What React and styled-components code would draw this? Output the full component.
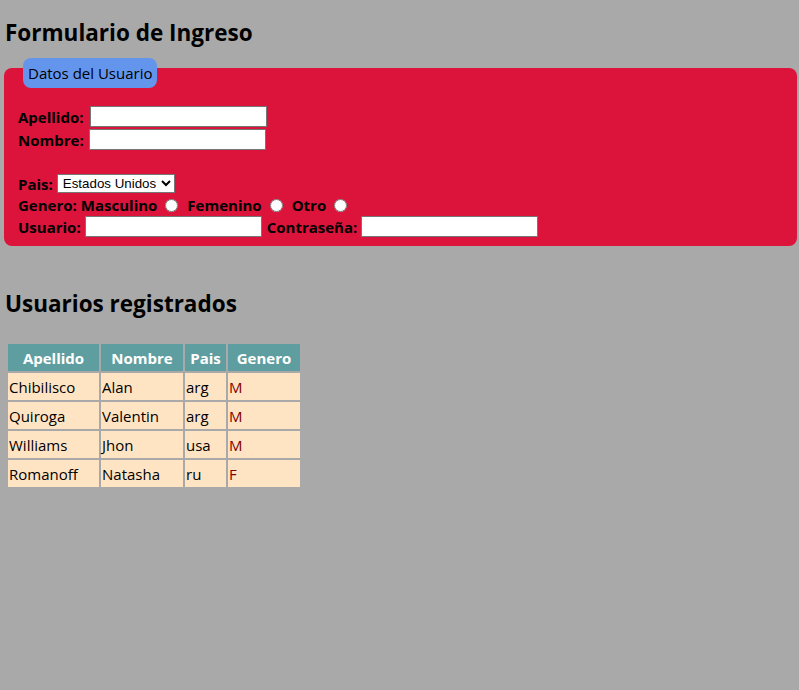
import React from "react";
import styled, { createGlobalStyle } from "styled-components";

const GlobalStyle = createGlobalStyle`
  html, body {
    margin: 0;
    padding: 0;
    background: #a9a9a9;
  }

  body {
    font-family: "Open Sans", "Noto Sans", sans-serif;
    font-size: 16px;
    color: #000;
  }
`;

const Page = styled.div`
  padding: 0 2px 0 4px;
  min-height: 690px;
`;

const Title = styled.h2`
  margin: 0;
  padding: ${(p) => p.$top}px 0 0 1px;
  font-size: 22.5px;
  font-weight: 700;
  line-height: 32px;
`;

const Panel = styled.div`
  margin-top: ${(p) => p.$top}px;
  display: flex;
  flex-direction: column;
  background: #dc143c;
  border-radius: 8px;
  padding: 0 12px 8px 14px;
`;

const Legend = styled.div`
  align-self: flex-start;
  margin: -10px 0 0 5px;
  padding: 0 5px;
  height: 30px;
  line-height: 30px;
  background: #6495ed;
  border-radius: 8px;
  font-size: 15px;
`;

const FormBody = styled.div`
  margin-top: 17px;
  display: flex;
  flex-direction: column;
`;

const Row = styled.div`
  display: flex;
  align-items: center;
  height: ${(p) => p.$h || 23}px;
  font-weight: 700;
  font-size: 15px;
  white-space: nowrap;
`;

const Spacer = styled.div`
  height: 21px;
`;

const Label = styled.label`
  margin-right: ${(p) => p.$after || 4}px;
  margin-left: ${(p) => p.$gap || 0}px;
`;

const TextInput = styled.input`
  box-sizing: border-box;
  width: 177px;
  height: 21px;
  margin: 0;
  padding: 1px 2px;
  border: 1px solid #767676;
  background: #fff;
  font: 13.33px "Liberation Sans", Arial, sans-serif;
`;

const Select = styled.select`
  box-sizing: border-box;
  width: 118px;
  height: 19px;
  margin: 0;
  padding: 0 0 0 1px;
  border: 1px solid #767676;
  border-radius: 0;
  background: #fff;
  color: #000;
  font: 13.33px "Liberation Sans", Arial, sans-serif;
`;

const Radio = styled.input`
  width: 13px;
  height: 13px;
  margin: 0 9px 0 8px;
`;

const Table = styled.table`
  margin: ${(p) => p.$top}px 0 0 2px;
  border-spacing: 2px;
  font-size: 15px;
`;

const Head = styled.th`
  width: ${(p) => p.$w}px;
  height: 27px;
  padding: 0;
  background: #5f9ea0;
  color: #fff;
  font-weight: 700;
  text-align: center;
`;

const Cell = styled.td`
  height: 27px;
  padding: 0 1px;
  background: #ffe4c4;
  color: ${(p) => (p.$accent ? "#800000" : "#000")};
`;

const columns = [
  { name: "Apellido", w: 91 },
  { name: "Nombre", w: 82 },
  { name: "Pais", w: 41 },
  { name: "Genero", w: 72 },
];

const users = [
  ["Chibilisco", "Alan", "arg", "M"],
  ["Quiroga", "Valentin", "arg", "M"],
  ["Williams", "Jhon", "usa", "M"],
  ["Romanoff", "Natasha", "ru", "F"],
];

export default function App() {
  return (
    <Page>
      <GlobalStyle />
      <Title $top={17}>Formulario de Ingreso</Title>
      <Panel $top={19}>
        <Legend>Datos del Usuario</Legend>
        <FormBody>
          <Row>
            <Label $after={6}>Apellido:</Label>
            <TextInput type="text" />
          </Row>
          <Row>
            <Label $after={5}>Nombre:</Label>
            <TextInput type="text" />
          </Row>
          <Spacer />
          <Row>
            <Label>Pais:</Label>
            <Select defaultValue="usa">
              <option value="arg">Argentina</option>
              <option value="usa">Estados Unidos</option>
              <option value="ru">Rusia</option>
            </Select>
          </Row>
          <Row $h={20}>
            <Label>Genero:</Label>
            <span>Masculino</span>
            <Radio type="radio" name="genero" />
            <span>Femenino</span>
            <Radio type="radio" name="genero" />
            <span>Otro</span>
            <Radio type="radio" name="genero" />
          </Row>
          <Row>
            <Label>Usuario:</Label>
            <TextInput type="text" />
            <Label $gap={5}>Contraseña:</Label>
            <TextInput type="password" />
          </Row>
        </FormBody>
      </Panel>
      <Title $top={42}>Usuarios registrados</Title>
      <Table $top={22}>
        <thead>
          <tr>
            {columns.map((c) => (
              <Head key={c.name} $w={c.w}>
                {c.name}
              </Head>
            ))}
          </tr>
        </thead>
        <tbody>
          {users.map((u, i) => (
            <tr key={i}>
              {u.map((v, j) => (
                <Cell key={j} $accent={j === 3}>
                  {v}
                </Cell>
              ))}
            </tr>
          ))}
        </tbody>
      </Table>
    </Page>
  );
}
